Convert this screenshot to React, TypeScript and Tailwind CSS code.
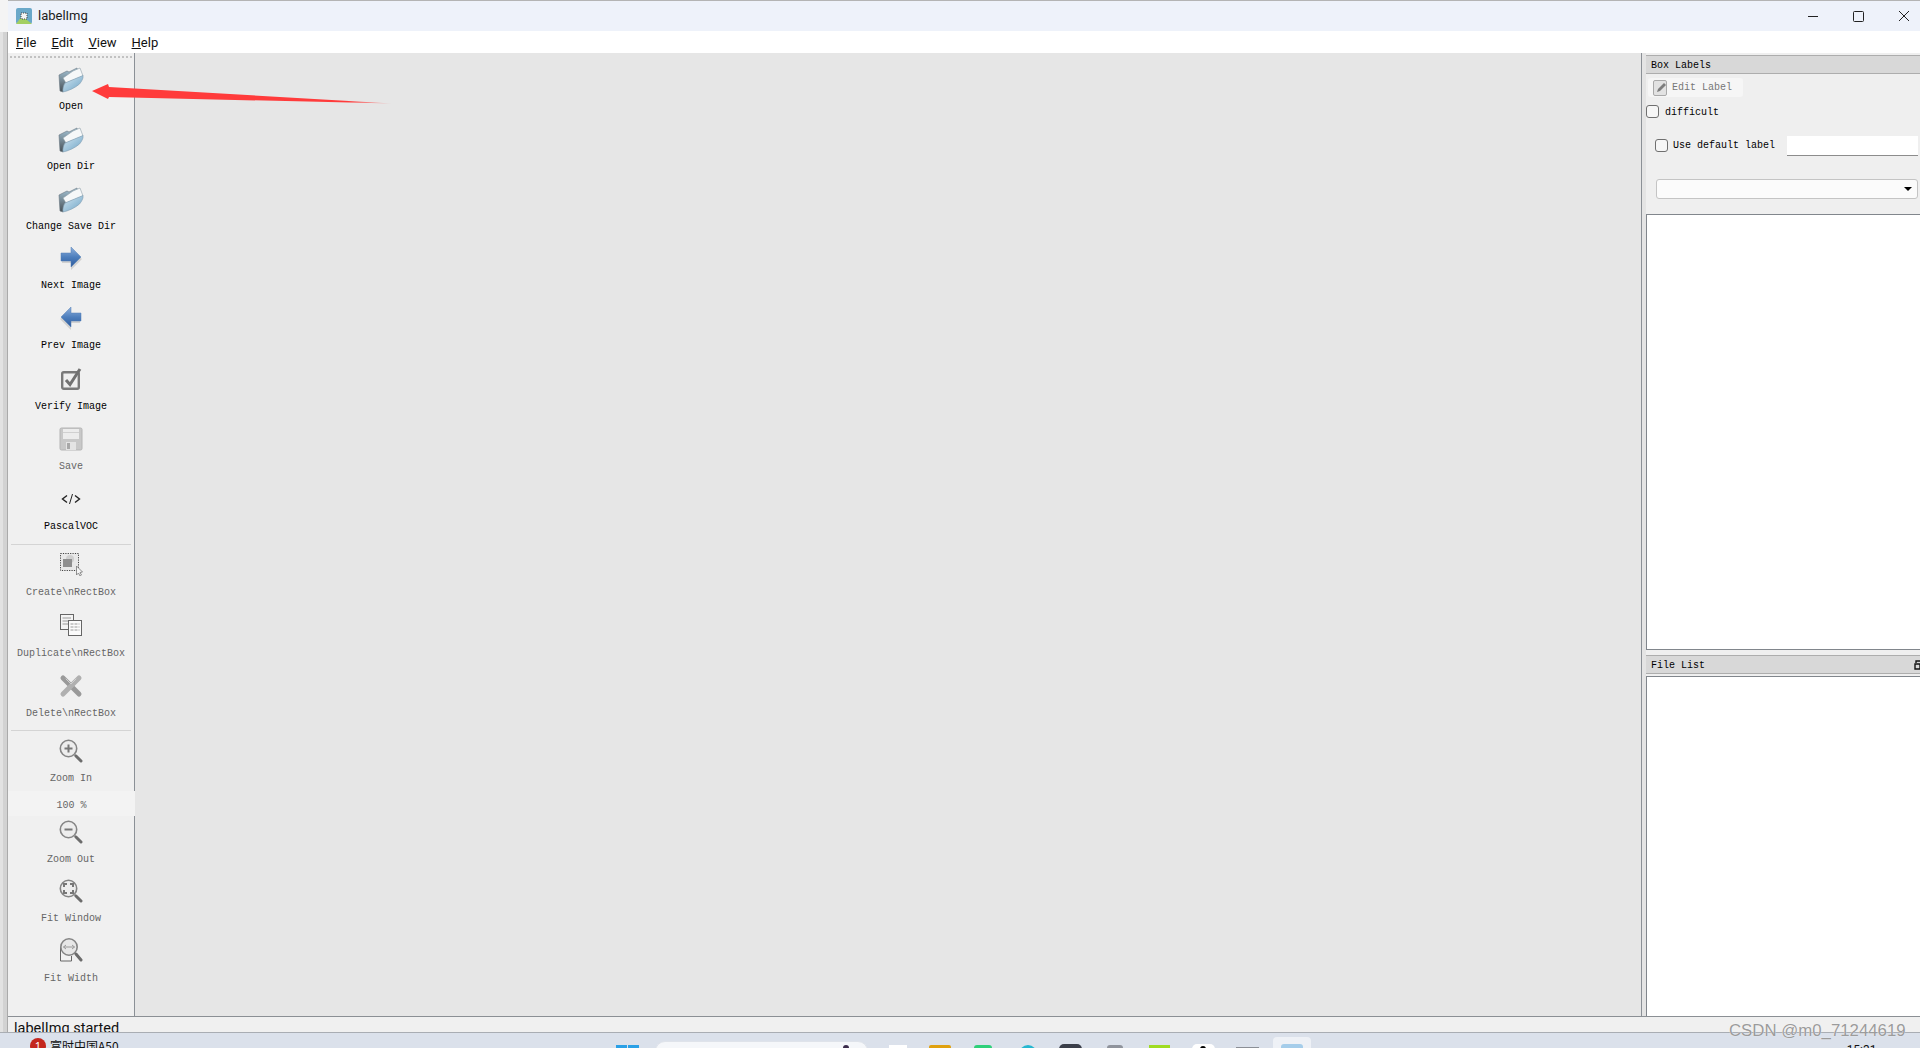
import type { ReactNode } from "react";

const uiFont = "font-['Roboto','Open_Sans',sans-serif]";
const monoFont = "font-['Liberation_Mono',monospace]";

function FolderIcon() {
  return (
    <svg width="26" height="27" viewBox="0 0 26 27">
      <defs>
        <linearGradient id="folderFront" x1="0" y1="0" x2="1" y2="1">
          <stop offset="0" stopColor="#d6e8f1" />
          <stop offset="1" stopColor="#6ba2c6" />
        </linearGradient>
        <linearGradient id="folderBack" x1="0" y1="0" x2="0" y2="1">
          <stop offset="0" stopColor="#a6c6d8" />
          <stop offset="1" stopColor="#474f55" />
        </linearGradient>
      </defs>
      <path d="M1 9 L9 5 L11 6 L19 2 L20 6 L5 26 L2 25 Z" fill="url(#folderBack)" stroke="#66747e" strokeWidth="0.6" />
      <path d="M5 12 L15 5 L22 2 L25 10 L8 17 Z" fill="#f6f8f9" stroke="#8e9fa9" strokeWidth="0.6" />
      <path d="M7 17 L25 9.5 C25.5 12 24 15 21.5 18 C17 22 10 25 5 26 C4.5 23 5.5 19 7 17 Z" fill="url(#folderFront)" stroke="#7f9cb0" strokeWidth="0.6" />
    </svg>
  );
}

function ArrowIcon({ flip }: { flip?: boolean }) {
  return (
    <svg width="24" height="24" viewBox="0 0 24 24" className={flip ? "-scale-x-100" : ""}>
      <defs>
        <linearGradient id="arrowFill" x1="0" y1="0" x2="0" y2="1">
          <stop offset="0" stopColor="#8fb0dc" />
          <stop offset="0.5" stopColor="#4e7fbd" />
          <stop offset="1" stopColor="#2d5a9c" />
        </linearGradient>
      </defs>
      <path d="M3 8 H12 V2 L23 12 L12 23 V16 H3 Z" fill="#8a8a8a" opacity="0.3" transform="translate(0 1)" />
      <path d="M2 7 H12 V1 L22 11 L12 21 V15 H2 Z" fill="url(#arrowFill)" stroke="#527eb5" strokeWidth="0.5" />
    </svg>
  );
}

function VerifyIcon() {
  return (
    <svg width="24" height="24" viewBox="0 0 24 24" fill="none">
      <rect x="3.2" y="5.2" width="16.6" height="16.6" rx="1.5" stroke="#7a7a7a" strokeWidth="2.4" />
      <path d="M7 13 L11 17.5 L21 2" stroke="#727272" strokeWidth="3" />
    </svg>
  );
}

function SaveIcon() {
  return (
    <svg width="24" height="24" viewBox="0 0 24 24">
      <rect x="1" y="1" width="22" height="22" rx="1.5" fill="#c8c8c8" stroke="#b4b4b4" />
      <rect x="4" y="2" width="16" height="10" fill="#ececec" />
      <rect x="4" y="5" width="16" height="1" fill="#d0d0d0" />
      <rect x="7" y="15" width="10" height="8" fill="#e4e4e4" />
      <rect x="8" y="16" width="3" height="6" fill="#a8a8a8" />
    </svg>
  );
}

function CodeIcon() {
  return (
    <svg width="20" height="12" viewBox="0 0 20 12" fill="none" stroke="#222" strokeWidth="1.4">
      <path d="M6 2.5 L1.5 6 L6 9.5" />
      <path d="M11.5 1 L8.5 11" strokeWidth="1" />
      <path d="M14 2.5 L18.5 6 L14 9.5" />
    </svg>
  );
}

function CreateIcon() {
  return (
    <svg width="24" height="24" viewBox="0 0 24 24">
      <rect x="1.5" y="1.5" width="18" height="17" fill="#e8e8e8" stroke="#444" strokeDasharray="1.2 1.2" />
      <circle cx="11" cy="7" r="4" fill="#cfcfcf" />
      <rect x="4" y="7" width="9" height="8" fill="#8e8e8e" />
      <path d="M17.5 14 V23 L19.5 21 L21 24 L22.5 23 L21 20.5 L23.5 20 Z" fill="#f4f4f4" stroke="#777" strokeWidth="0.8" />
    </svg>
  );
}

function DuplicateIcon() {
  return (
    <svg width="24" height="24" viewBox="0 0 24 24">
      <rect x="1.5" y="1.5" width="13" height="15" fill="#f4f4f4" stroke="#666" />
      <path d="M3.5 5 H12 M3.5 8 H12 M3.5 11 H12" stroke="#9a9a9a" />
      <rect x="9.5" y="7.5" width="13" height="15" fill="#fbfbfb" stroke="#666" />
      <path d="M11.5 11 H20.5 M11.5 14 H20.5 M11.5 17 H20.5" stroke="#9a9a9a" strokeDasharray="3 1" />
    </svg>
  );
}

function DeleteIcon() {
  return (
    <svg width="24" height="24" viewBox="0 0 24 24" fill="none" strokeLinecap="round">
      <path d="M4 4 L20 20" stroke="#9a9a9a" strokeWidth="5" />
      <path d="M20 4 L4 20" stroke="#b0b0b0" strokeWidth="5" />
      <path d="M7 5 L12 10 L17 5" stroke="#d0d0d0" strokeWidth="1" />
    </svg>
  );
}

function ZoomGlyph({ d, width = 2 }: { d: string; width?: number }) {
  return (
    <svg width="24" height="24" viewBox="0 0 24 24" fill="none">
      <circle cx="9.5" cy="9.5" r="8.2" fill="#ededed" stroke="#858585" strokeWidth="1.6" />
      <path d={d} stroke="#777" strokeWidth={width} />
      <path d="M15.5 15.5 L17 17" stroke="#a0a0a0" strokeWidth="2" />
      <path d="M17 17 L22 22" stroke="#6c6c6c" strokeWidth="3" strokeLinecap="round" />
    </svg>
  );
}

function FitWidthIcon() {
  return (
    <svg width="24" height="24" viewBox="0 0 24 24" fill="none">
      <path d="M1.5 9 V23 H12.5 V18" fill="#f2f2f2" stroke="#666" />
      <circle cx="10" cy="9" r="8.2" fill="#e6e6e6" fillOpacity="0.9" stroke="#858585" strokeWidth="1.6" />
      <path d="M4.5 9 H15.5 M4.5 9 L7 7 M4.5 9 L7 11 M15.5 9 L13 7 M15.5 9 L13 11" stroke="#999" />
      <path d="M17 16 L22 22" stroke="#6c6c6c" strokeWidth="3" strokeLinecap="round" />
    </svg>
  );
}

type Tool = {
  label: string;
  icon: ReactNode;
  disabled?: boolean;
  height: string;
  labelGap?: string;
};

const fileTools: Tool[] = [
  { label: "Open", icon: <FolderIcon />, height: "h-[60px]" },
  { label: "Open Dir", icon: <FolderIcon />, height: "h-[60px]" },
  { label: "Change Save Dir", icon: <FolderIcon />, height: "h-[59px]" },
  { label: "Next Image", icon: <ArrowIcon />, height: "h-[60px]" },
  { label: "Prev Image", icon: <ArrowIcon flip />, height: "h-[61px]" },
  { label: "Verify Image", icon: <VerifyIcon />, height: "h-[60px]" },
  { label: "Save", icon: <SaveIcon />, disabled: true, height: "h-[60px]" },
  { label: "PascalVOC", icon: <CodeIcon />, height: "h-[61px]" },
];

const boxTools: Tool[] = [
  { label: "Create\\nRectBox", icon: <CreateIcon />, disabled: true, height: "h-[61px]", labelGap: "mt-[7px]" },
  { label: "Duplicate\\nRectBox", icon: <DuplicateIcon />, disabled: true, height: "h-[61px]", labelGap: "mt-[7px]" },
  { label: "Delete\\nRectBox", icon: <DeleteIcon />, disabled: true, height: "h-[60px]", labelGap: "mt-[6px]" },
];

const fitTools: Tool[] = [
  { label: "Zoom Out", icon: <ZoomGlyph d="M5.5 9.5 H13.5" />, disabled: true, height: "h-[59px]", labelGap: "mt-[6px]" },
  { label: "Fit Window", icon: <ZoomGlyph d="M5 8 V5 H8 M11 5 H14 V8 M14 11 V14 H11 M8 14 H5 V11" />, disabled: true, height: "h-[59px]" },
  { label: "Fit Width", icon: <FitWidthIcon />, disabled: true, height: "h-[60px]", labelGap: "mt-[7px]" },
];

function ToolButton({ tool }: { tool: Tool }) {
  return (
    <div className={`flex flex-col items-center ${tool.height}`}>
      <div className="flex h-[32px] w-full items-center justify-center">{tool.icon}</div>
      <span
        className={`${tool.labelGap ?? "mt-[6px]"} h-[12px] whitespace-nowrap text-[10px] leading-[12px] ${monoFont} ${
          tool.disabled ? "text-[#666]" : "text-black"
        }`}
      >
        {tool.label}
      </span>
    </div>
  );
}

function Separator({ className }: { className: string }) {
  return <div className={`mx-[3px] h-px bg-[#d4d4d4] ${className}`} />;
}

function ZoomInGlyph() {
  return <ZoomGlyph d="M9.5 5.5 V13.5 M5.5 9.5 H13.5" />;
}

function Toolbar() {
  return (
    <aside className="flex w-[127px] shrink-0 flex-col border-r border-[#8b9096] bg-[#f0f0f0]">
      <div className="mx-[2px] mt-[3px] h-[7px] border-t-2 border-dotted border-[#c2c2c2]" />
      {fileTools.map((tool) => (
        <ToolButton key={tool.label} tool={tool} />
      ))}
      <Separator className="mb-[3px]" />
      {boxTools.map((tool) => (
        <ToolButton key={tool.label} tool={tool} />
      ))}
      <Separator className="mb-[4px]" />
      <ToolButton tool={{ label: "Zoom In", icon: <ZoomInGlyph />, disabled: true, height: "h-[56px]" }} />
      <div className={`-mr-px flex h-[25px] items-center justify-center bg-[#f3f3f3] pt-[4px] text-[10px] text-[#666] ${monoFont}`}>
        100 %
      </div>
      {fitTools.map((tool) => (
        <ToolButton key={tool.label} tool={tool} />
      ))}
    </aside>
  );
}

function DockHeader({ title, floatIcon }: { title: string; floatIcon?: boolean }) {
  return (
    <div className={`flex h-[19px] shrink-0 items-center justify-between border-y border-[#adadad] bg-[#d8d8d8] pl-[5px] text-[10px] text-black ${monoFont}`}>
      <span className="pt-[2px]">{title}</span>
      {floatIcon && (
        <svg width="6" height="10" viewBox="0 0 6 10" fill="none" stroke="#111" strokeWidth="1.4">
          <path d="M2 3 V1 H6 M1 4 H6 V9 H1 Z" />
        </svg>
      )}
    </div>
  );
}

function CheckBox() {
  return <span className="h-[13px] w-[13px] shrink-0 rounded-[3px] border border-[#6f6f6f] bg-[#f6f6f6]" />;
}

function RightPanel() {
  return (
    <aside className={`ml-[4px] flex w-[274px] shrink-0 flex-col bg-[#efefef] pt-[2px] text-[10px] ${monoFont}`}>
      <DockHeader title="Box Labels" />
      <div className="ml-[2px] mt-[4px] flex h-[19px] w-[95px] items-center gap-[4px] rounded-[3px] bg-[#f6f6f6] pl-[5px] text-[#777]">
        <svg width="15" height="16" viewBox="0 0 15 16">
          <rect x="0.5" y="0.5" width="13" height="15" rx="1.5" fill="#e2e2e2" stroke="#a9a9a9" />
          <path d="M4 12 L5 9 L11 3 L13 5 L7 11 Z" fill="#7d7d7d" />
        </svg>
        Edit Label
      </div>
      <label className="mt-[6px] flex items-center gap-[6px] text-black">
        <CheckBox />
        <span className="pt-[2px]">difficult</span>
      </label>
      <div className="mt-[15px] flex h-[21px] items-center pl-[9px] text-black">
        <CheckBox />
        <span className="ml-[5px]">Use default label</span>
        <div className="ml-[12px] h-[20px] w-[131px] border-b border-[#8c8c8c] bg-white" />
      </div>
      <div className="ml-[10px] mt-[23px] flex h-[20px] w-[262px] items-center justify-end rounded-[3px] border border-[#c4c4c4] bg-[#fbfbfb] pr-[5px]">
        <span className="h-0 w-0 border-x-[4px] border-t-[4px] border-x-transparent border-t-black" />
      </div>
      <div className="mt-[15px] h-[436px] border-y border-l border-[#81868c] bg-white" />
      <div className="mt-[5px]">
        <DockHeader title="File List" floatIcon />
      </div>
      <div className="mt-[2px] flex-1 border-t border-l border-[#81868c] bg-white" />
    </aside>
  );
}

function WindowControls() {
  return (
    <svg width="102" height="12" viewBox="0 0 102 12" fill="none" stroke="#222" strokeWidth="1">
      <path d="M0 6.5 H10" />
      <rect x="45.5" y="1.5" width="10" height="10" rx="1" />
      <path d="M91 1 L101 11 M101 1 L91 11" />
    </svg>
  );
}

function AppLogo() {
  return (
    <svg width="16" height="16" viewBox="0 0 16 16">
      <rect width="16" height="16" rx="2" fill="#6aa8c9" />
      <path d="M0 16 L6 8 L16 16 Z" fill="#a3cf62" />
      <rect x="5" y="5" width="6" height="6" fill="#f3f3f3" stroke="#444" strokeDasharray="1 1" />
    </svg>
  );
}

function Taskbar() {
  return (
    <footer className="flex h-[16px] shrink-0 overflow-hidden border-t border-[#a9adb3] bg-[#dbe1eb]">
      <div className="ml-[30px] mt-[5px] h-[16px] w-[16px] shrink-0 rounded-full bg-[#c4261d] text-center text-[11px] leading-[16px] text-white">1</div>
      <span className="ml-[4px] mt-[5px] whitespace-nowrap text-[12px] leading-[16px] text-[#111] font-['Noto_Sans_CJK_SC','Noto_Sans',sans-serif]">富时中国A50</span>
      <div className="ml-[497px] mt-[12px] grid h-[16px] w-[23px] shrink-0 grid-cols-2 gap-px">
        <span className="h-[10px] bg-[#2aa0e6]" />
        <span className="h-[10px] bg-[#2aa0e6]" />
      </div>
      <div className="ml-[16px] mt-[8px] flex h-[20px] w-[213px] shrink-0 justify-end rounded-t-[10px] border border-[#dfe3ea] bg-[#f5f7fa] pr-[18px]">
        <span className="mt-[3px] h-[6px] w-[6px] rounded-full bg-[#3b2b4b]" />
      </div>
      <span className="ml-[21px] mt-[12px] h-[10px] w-[18px] shrink-0 bg-white" />
      <span className="ml-[22px] mt-[12px] h-[10px] w-[22px] shrink-0 rounded-t-[2px] bg-[#e0a10f]" />
      <span className="ml-[23px] mt-[12px] h-[10px] w-[18px] shrink-0 rounded-t-[3px] bg-[#2fd07a]" />
      <span className="ml-[27px] mt-[12px] h-[18px] w-[18px] shrink-0 rounded-full bg-[#26b7d0]" />
      <span className="ml-[22px] mt-[11px] h-[14px] w-[23px] shrink-0 rounded-t-[5px] bg-[#3b3f4a]" />
      <span className="ml-[25px] mt-[12px] h-[10px] w-[16px] shrink-0 rounded-t-[3px] bg-[#8f939c]" />
      <span className="ml-[26px] mt-[12px] h-[10px] w-[21px] shrink-0 bg-[#9fdc22]" />
      <span className="ml-[22px] mt-[11px] flex h-[14px] w-[23px] shrink-0 justify-center rounded-t-[5px] bg-white">
        <span className="mt-[2px] h-[6px] w-[6px] rounded-full bg-black" />
      </span>
      <span className="ml-[21px] mt-[14px] h-[8px] w-[23px] shrink-0 bg-[#8b8f96]" />
      <div className="ml-[14px] mt-[4px] flex h-[20px] w-[38px] shrink-0 justify-center rounded-t-[4px] bg-[#eef1f6] pt-[7px]">
        <span className="h-[10px] w-[22px] rounded-t-[3px] bg-[#a5cdea]" />
      </div>
      <span className={`ml-[536px] mt-[10px] text-[12px] leading-[14px] text-[#111] ${uiFont}`}>15:31</span>
    </footer>
  );
}

export default function App() {
  return (
    <div className="relative flex h-[1048px] w-[1920px] flex-col overflow-hidden bg-[#e4e4e4]">
      <div className="flex min-h-0 flex-1">
        <div className="flex w-[8px] shrink-0 flex-col">
          <div className="h-[32px] bg-[#f4f4f4]" />
          <div className="flex flex-1">
            <div className="w-[3px] bg-[#e2e2e2]" />
            <div className="w-[5px] border-r border-[#aaa] bg-[#d2d2d2]" />
          </div>
        </div>

        <div className="flex min-w-0 flex-1 flex-col">
          <header className={`flex h-[31px] shrink-0 items-center justify-between border-t border-[#b4b4b4] bg-[#eef2fa] pl-[8px] pr-[10px] text-[13px] text-[#1c1c1c] ${uiFont}`}>
            <div className="flex items-center gap-[6px]">
              <AppLogo />
              <span>labelImg</span>
            </div>
            <WindowControls />
          </header>

          <nav className={`flex h-[22px] shrink-0 items-center gap-[15px] bg-white pl-[8px] pt-[2px] text-[13px] text-[#111] ${uiFont}`}>
            <span><u>F</u>ile</span>
            <span><u>E</u>dit</span>
            <span><u>V</u>iew</span>
            <span><u>H</u>elp</span>
          </nav>

          <main className="flex min-h-0 flex-1 border-b border-[#8b8f94]">
            <Toolbar />
            <section className="flex-1 border-r border-[#8b9096] bg-[#e6e6e6]" />
            <RightPanel />
          </main>

          <div className={`h-[15px] shrink-0 overflow-hidden bg-[#f0f0f0] pl-[6px] text-[14.5px] leading-[24px] text-[#111] ${uiFont}`}>
            labelImg started
          </div>
        </div>
      </div>

      <Taskbar />

      {/* annotation drawn over the screenshot */}
      <svg className="absolute left-[90px] top-[80px]" width="305" height="26" viewBox="0 0 305 26">
        <defs>
          <linearGradient id="redArrow" x1="0" y1="0" x2="1" y2="0">
            <stop offset="0" stopColor="#ff3b3b" />
            <stop offset="0.85" stopColor="#ff3b3b" />
            <stop offset="1" stopColor="#ff3b3b" stopOpacity="0.2" />
          </linearGradient>
        </defs>
        <path d="M2 11 L18 4 L19 7 L302 23.5 L19 17 L18 19 Z" fill="url(#redArrow)" />
      </svg>

      <span className="absolute left-[1729px] top-[1021px] text-[16.8px] leading-[19px] text-[#9b9b9b] [text-shadow:0_0_1px_#fff] font-['Liberation_Sans',sans-serif]">
        CSDN @m0_71244619
      </span>
    </div>
  );
}
